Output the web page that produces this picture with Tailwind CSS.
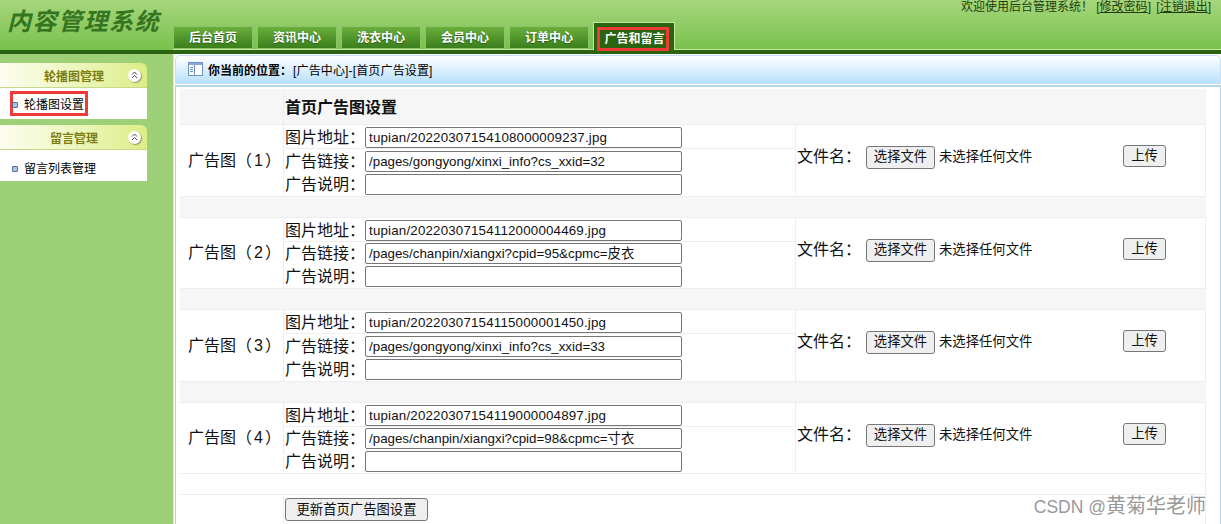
<!DOCTYPE html>
<html lang="zh-CN">
<head>
  <meta charset="UTF-8" />
  <title>内容管理系统</title>
  <script src="https://cdn.jsdelivr.net/npm/@tailwindcss/browser@4"></script>
</head>
<body class="relative h-[524px] w-[1221px] overflow-hidden bg-[#9dd077] font-['Liberation_Sans','Noto_Sans_CJK_SC',sans-serif] text-black">

  <!-- Top bar -->
  <header class="flex h-[54px] border-b-[4px] border-[#2a6410] bg-gradient-to-b from-[#a6d67c] to-[#78c14c]">
    <div class="w-[173px] pl-[7px] pt-[5px] text-[24px] leading-[34px] font-bold italic tracking-[1.5px] text-[#35751f]">内容管理系统</div>
    <div class="flex flex-1 flex-col">
      <p class="h-[16px] pr-[10px] text-right text-[12px] leading-[15px] text-[#1f3d10]">欢迎使用后台管理系统！ [<a class="underline">修改密码</a>] <span class="ml-[2px]">[<a class="underline">注销退出</a>]</span></p>
      <nav class="mt-[7px] flex h-[27px] items-end gap-[4px] border-b border-[#c6e89e]">
        <a class="flex h-[23px] w-[80px] items-center justify-center border border-[#8cc46a] bg-gradient-to-b from-[#6aaf3c] to-[#3a7f1c] text-[12px] font-bold text-white [text-shadow:0_1px_1px_#2a5a10]">后台首页</a>
        <a class="flex h-[23px] w-[80px] items-center justify-center border border-[#8cc46a] bg-gradient-to-b from-[#6aaf3c] to-[#3a7f1c] text-[12px] font-bold text-white [text-shadow:0_1px_1px_#2a5a10]">资讯中心</a>
        <a class="flex h-[23px] w-[80px] items-center justify-center border border-[#8cc46a] bg-gradient-to-b from-[#6aaf3c] to-[#3a7f1c] text-[12px] font-bold text-white [text-shadow:0_1px_1px_#2a5a10]">洗衣中心</a>
        <a class="flex h-[23px] w-[80px] items-center justify-center border border-[#8cc46a] bg-gradient-to-b from-[#6aaf3c] to-[#3a7f1c] text-[12px] font-bold text-white [text-shadow:0_1px_1px_#2a5a10]">会员中心</a>
        <a class="flex h-[23px] w-[80px] items-center justify-center border border-[#8cc46a] bg-gradient-to-b from-[#6aaf3c] to-[#3a7f1c] text-[12px] font-bold text-white [text-shadow:0_1px_1px_#2a5a10]">订单中心</a>
        <a class="mb-[-1px] flex h-[28px] w-[82px] items-end border border-b-0 border-[#c6e89e] bg-[#2a6410] pl-[3px]">
          <span class="mb-[-1px] flex h-[24px] w-[72px] items-center justify-center border-[3px] border-[#f03a3a] pl-[3px] text-[12px] font-bold whitespace-nowrap text-white">广告和留言</span>
        </a>
      </nav>
    </div>
  </header>

  <div class="flex">
    <!-- Sidebar -->
    <aside class="w-[173px] shrink-0 pt-[9px]">
      <section class="w-[147px]">
        <div class="flex h-[25px] items-center rounded-tr-[6px] border-b border-[#c9d88a] bg-gradient-to-r from-[#fdfdf0] to-[#dcee86]">
          <span class="w-[128px] pl-[20px] pt-[3px] text-center text-[12px] font-bold text-[#7d7d12]">轮播图管理</span>
          <span class="flex size-[13px] items-center justify-center rounded-full bg-white shadow-[1px_1px_1px_#9a9a6a]">
            <svg width="7" height="8" viewBox="0 0 7 8" fill="none" stroke="#444" stroke-width="1"><path d="M1 3.5 3.5 1 6 3.5M1 7 3.5 4.5 6 7" /></svg>
          </span>
        </div>
        <div class="flex h-[31px] items-center bg-white pl-[10px]">
          <span class="flex h-[25px] w-[78px] items-center border-[3px] border-[#f03a3a] pt-[3px] text-[12px] whitespace-nowrap">
            <i class="mr-[6px] ml-[-1px] size-[6px] rounded-[1px] border border-[#5a6a8a] bg-[#a8c4ee]"></i>轮播图设置
          </span>
        </div>
      </section>
      <section class="mt-[6px] w-[147px]">
        <div class="flex h-[25px] items-center rounded-tr-[6px] border-b border-[#c9d88a] bg-gradient-to-r from-[#fdfdf0] to-[#dcee86]">
          <span class="w-[128px] pl-[20px] pt-[3px] text-center text-[12px] font-bold text-[#7d7d12]">留言管理</span>
          <span class="flex size-[13px] items-center justify-center rounded-full bg-white shadow-[1px_1px_1px_#9a9a6a]">
            <svg width="7" height="8" viewBox="0 0 7 8" fill="none" stroke="#444" stroke-width="1"><path d="M1 3.5 3.5 1 6 3.5M1 7 3.5 4.5 6 7" /></svg>
          </span>
        </div>
        <div class="flex h-[31px] items-center bg-white pl-[12px] pt-[6px] text-[12px]">
          <i class="mr-[6px] size-[6px] rounded-[1px] border border-[#5a6a8a] bg-[#a8c4ee]"></i>留言列表管理
        </div>
      </section>
    </aside>

    <!-- Main -->
    <main class="h-[470px] flex-1 border-l border-[#d8e8ee] bg-white">
      <div class="ml-[1px] mt-[1px] flex h-[29px] items-center rounded-t-[5px] border border-[#c4e0f2] bg-gradient-to-b from-white to-[#b8e0fa] pl-[12px] pt-[2px] text-[12px]">
        <svg class="mr-[5px] mb-[3px]" width="15" height="14" viewBox="0 0 15 14">
          <rect x="0.5" y="0.5" width="14" height="13" fill="#fff" stroke="#6f8fc5" />
          <rect x="1" y="1" width="13" height="2" fill="#8aa8d8" />
          <path d="M6.5 3v10" stroke="#6f8fc5" />
          <path d="M2 5.5h3M2 7.5h3M2 9.5h3" stroke="#6f8fc5" />
        </svg>
        <b class="mr-[1px]">你当前的位置：</b><span class="tracking-[0.15px]">[广告中心]-[首页广告设置]</span>
      </div>

      <div class="ml-[1px] mt-[1px] h-[439px] border-x border-t-[2px] border-l-[#cccccc] border-r-[#b4d6e6] border-t-[#b4d6e6] pl-[4px] pr-[14px] pt-[2px]">
        <div class="text-[16px] text-[#111]">
          <!-- heading row -->
          <div class="grid h-[36px] grid-cols-[104px_1fr] border-b border-[#eeeeee] bg-[#f6f6f6]">
            <div class="border-r border-[#eeeeee]"></div>
            <div class="pl-[1px] pt-[8px] text-[16px] leading-[22px] font-bold">首页广告图设置</div>
          </div>

          <!-- ad 1 -->
          <div class="grid h-[71px] grid-cols-[104px_512px_1fr] border-r border-[#eeeeee] bg-white">
            <div class="flex items-center border-r border-[#eeeeee] pl-[8px]">广告图（<span class="mx-[2px]">1</span>）</div>
            <div class="flex flex-col border-r border-[#eeeeee] pl-[1px]">
              <label class="flex h-[24px] shrink-0 items-end border-b border-[#eeeeee] leading-[21px]">图片地址：<input value="tupian/20220307154108000009237.jpg" class="h-[21px] w-[317px] rounded-[2px] border border-[#767676] pl-[3px] pr-[2px] text-[13.33px] tracking-[0.18px]" /></label>
              <label class="flex h-[23px] shrink-0 items-end leading-[21px]">广告链接：<input value="/pages/gongyong/xinxi_info?cs_xxid=32" class="h-[21px] w-[317px] rounded-[2px] border border-[#767676] pl-[3px] pr-[2px] text-[13.33px]" /></label>
              <label class="flex h-[23px] shrink-0 items-end leading-[21px]">广告说明：<input class="h-[21px] w-[317px] rounded-[2px] border border-[#767676] pl-[3px] pr-[2px] text-[13.33px]" /></label>
            </div>
            <div class="flex items-start justify-between pl-[1px] pr-[39px] pt-[20px]">
              <div class="flex items-center">文件名：<button class="ml-[5px] h-[23px] w-[69px] rounded-[3px] border border-[#767676] bg-[#efefef] text-[13.33px]">选择文件</button><span class="ml-[4px] text-[13.33px]">未选择任何文件</span></div>
              <button class="h-[22px] w-[43px] rounded-[3px] border border-[#767676] bg-[#efefef] text-[13.33px]">上传</button>
            </div>
          </div>
          <div class="h-[22px] border-y border-[#eeeeee] bg-[#f6f6f6]"></div>

          <!-- ad 2 -->
          <div class="grid h-[70px] grid-cols-[104px_512px_1fr] border-r border-[#eeeeee] bg-white">
            <div class="flex items-center border-r border-[#eeeeee] pl-[8px]">广告图（<span class="mx-[2px]">2</span>）</div>
            <div class="flex flex-col border-r border-[#eeeeee] pl-[1px]">
              <label class="flex h-[24px] shrink-0 items-end border-b border-[#eeeeee] leading-[21px]">图片地址：<input value="tupian/20220307154112000004469.jpg" class="h-[21px] w-[317px] rounded-[2px] border border-[#767676] pl-[3px] pr-[2px] text-[13.33px] tracking-[0.18px]" /></label>
              <label class="flex h-[22px] shrink-0 items-end leading-[21px]">广告链接：<input value="/pages/chanpin/xiangxi?cpid=95&amp;cpmc=皮衣" class="h-[21px] w-[317px] rounded-[2px] border border-[#767676] pl-[3px] pr-[2px] text-[13.33px]" /></label>
              <label class="flex h-[23px] shrink-0 items-end leading-[21px]">广告说明：<input class="h-[21px] w-[317px] rounded-[2px] border border-[#767676] pl-[3px] pr-[2px] text-[13.33px]" /></label>
            </div>
            <div class="flex items-start justify-between pl-[1px] pr-[39px] pt-[20px]">
              <div class="flex items-center">文件名：<button class="ml-[5px] h-[23px] w-[69px] rounded-[3px] border border-[#767676] bg-[#efefef] text-[13.33px]">选择文件</button><span class="ml-[4px] text-[13.33px]">未选择任何文件</span></div>
              <button class="h-[22px] w-[43px] rounded-[3px] border border-[#767676] bg-[#efefef] text-[13.33px]">上传</button>
            </div>
          </div>
          <div class="h-[22px] border-y border-[#eeeeee] bg-[#f6f6f6]"></div>

          <!-- ad 3 -->
          <div class="grid h-[71px] grid-cols-[104px_512px_1fr] border-r border-[#eeeeee] bg-white">
            <div class="flex items-center border-r border-[#eeeeee] pl-[8px]">广告图（<span class="mx-[2px]">3</span>）</div>
            <div class="flex flex-col border-r border-[#eeeeee] pl-[1px]">
              <label class="flex h-[24px] shrink-0 items-end border-b border-[#eeeeee] leading-[21px]">图片地址：<input value="tupian/20220307154115000001450.jpg" class="h-[21px] w-[317px] rounded-[2px] border border-[#767676] pl-[3px] pr-[2px] text-[13.33px] tracking-[0.18px]" /></label>
              <label class="flex h-[23px] shrink-0 items-end leading-[21px]">广告链接：<input value="/pages/gongyong/xinxi_info?cs_xxid=33" class="h-[21px] w-[317px] rounded-[2px] border border-[#767676] pl-[3px] pr-[2px] text-[13.33px]" /></label>
              <label class="flex h-[23px] shrink-0 items-end leading-[21px]">广告说明：<input class="h-[21px] w-[317px] rounded-[2px] border border-[#767676] pl-[3px] pr-[2px] text-[13.33px]" /></label>
            </div>
            <div class="flex items-start justify-between pl-[1px] pr-[39px] pt-[20px]">
              <div class="flex items-center">文件名：<button class="ml-[5px] h-[23px] w-[69px] rounded-[3px] border border-[#767676] bg-[#efefef] text-[13.33px]">选择文件</button><span class="ml-[4px] text-[13.33px]">未选择任何文件</span></div>
              <button class="h-[22px] w-[43px] rounded-[3px] border border-[#767676] bg-[#efefef] text-[13.33px]">上传</button>
            </div>
          </div>
          <div class="h-[22px] border-y border-[#eeeeee] bg-[#f6f6f6]"></div>

          <!-- ad 4 -->
          <div class="grid h-[70px] grid-cols-[104px_512px_1fr] border-r border-[#eeeeee] bg-white">
            <div class="flex items-center border-r border-[#eeeeee] pl-[8px]">广告图（<span class="mx-[2px]">4</span>）</div>
            <div class="flex flex-col border-r border-[#eeeeee] pl-[1px]">
              <label class="flex h-[24px] shrink-0 items-end border-b border-[#eeeeee] leading-[21px]">图片地址：<input value="tupian/20220307154119000004897.jpg" class="h-[21px] w-[317px] rounded-[2px] border border-[#767676] pl-[3px] pr-[2px] text-[13.33px] tracking-[0.18px]" /></label>
              <label class="flex h-[22px] shrink-0 items-end leading-[21px]">广告链接：<input value="/pages/chanpin/xiangxi?cpid=98&amp;cpmc=寸衣" class="h-[21px] w-[317px] rounded-[2px] border border-[#767676] pl-[3px] pr-[2px] text-[13.33px]" /></label>
              <label class="flex h-[23px] shrink-0 items-end leading-[21px]">广告说明：<input class="h-[21px] w-[317px] rounded-[2px] border border-[#767676] pl-[3px] pr-[2px] text-[13.33px]" /></label>
            </div>
            <div class="flex items-start justify-between pl-[1px] pr-[39px] pt-[20px]">
              <div class="flex items-center">文件名：<button class="ml-[5px] h-[23px] w-[69px] rounded-[3px] border border-[#767676] bg-[#efefef] text-[13.33px]">选择文件</button><span class="ml-[4px] text-[13.33px]">未选择任何文件</span></div>
              <button class="h-[22px] w-[43px] rounded-[3px] border border-[#767676] bg-[#efefef] text-[13.33px]">上传</button>
            </div>
          </div>
          <div class="h-[22px] border-y border-r border-[#eeeeee] bg-white"></div>

          <!-- submit -->
          <div class="grid h-[40px] grid-cols-[104px_1fr] border-r border-[#eeeeee] bg-white">
            <div class="border-r border-[#eeeeee]"></div>
            <div class="flex items-start pl-[1px] pt-[3px]"><button class="h-[23px] w-[143px] rounded-[3px] border border-[#767676] bg-[#efefef] text-[13.33px]">更新首页广告图设置</button></div>
          </div>
        </div>
      </div>
    </main>
  </div>

  <!-- Watermark -->
  <div class="absolute bottom-[6px] right-[15px] text-[20px] leading-[22px] text-[#999999]"><span class="text-[17.5px]">CSDN @</span>黄菊华老师</div>
</body>
</html>
